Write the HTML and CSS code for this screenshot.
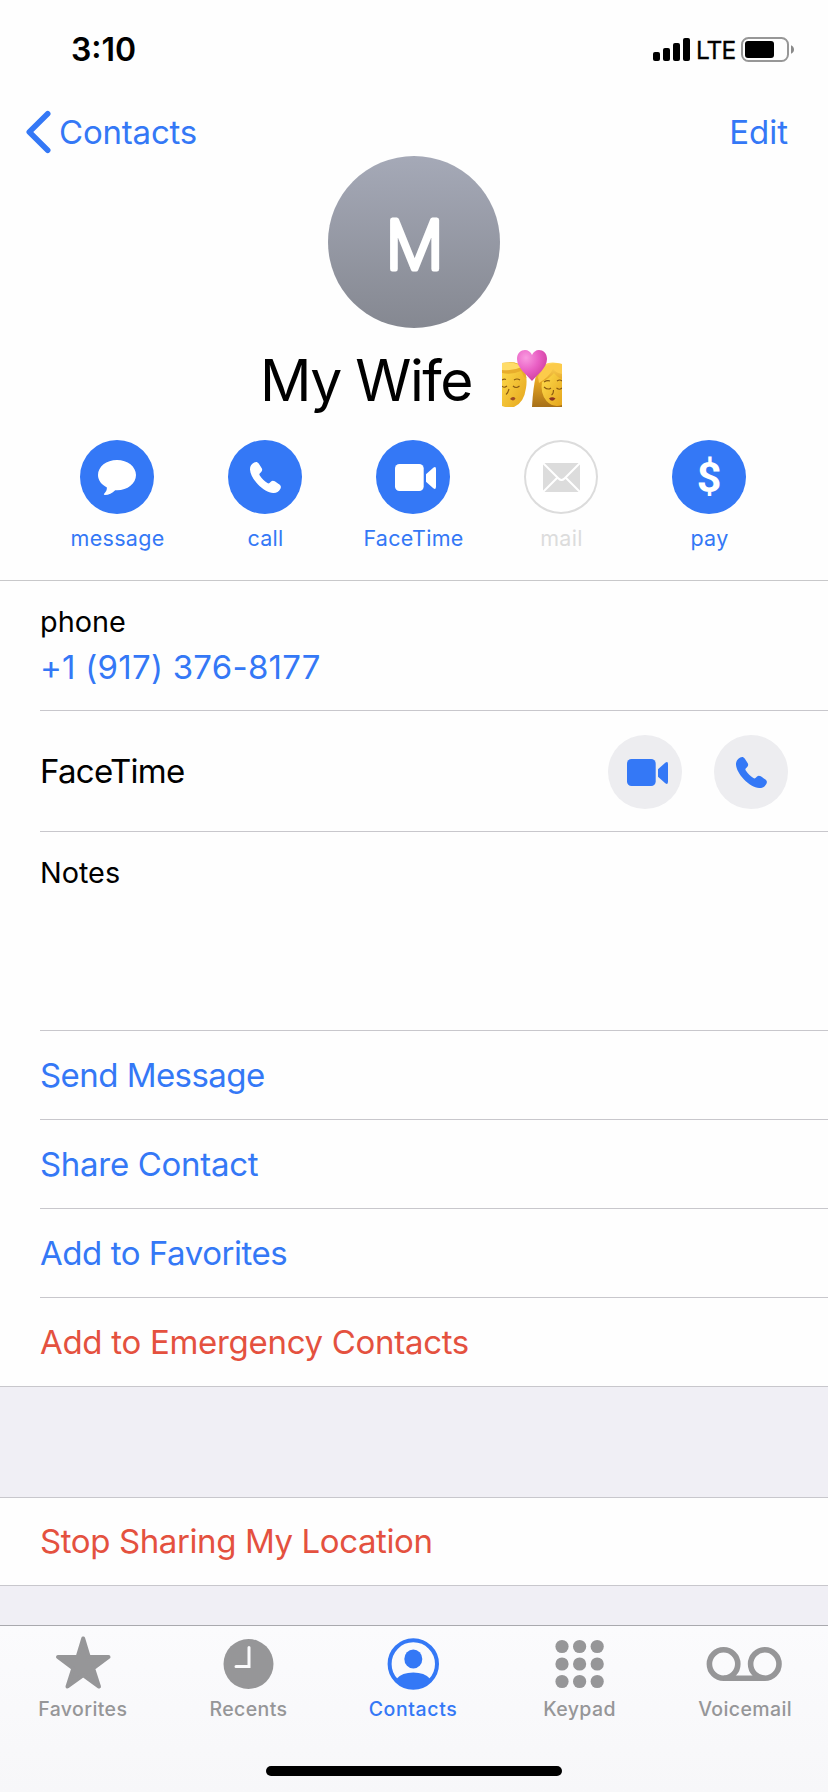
FILE: index.html
```html
<!DOCTYPE html>
<html lang="en">
<head>
<meta charset="utf-8">
<title>My Wife</title>
<link rel="stylesheet" href="styles.css">
</head>
<body>
<svg class="defs" width="0" height="0" aria-hidden="true">
  <symbol id="i-video" viewBox="0 0 74 74">
    <rect x="19" y="24" width="28.7" height="27" rx="4.5"/>
    <path d="M50 34.3 57.3 27.7Q60 25.8 60 29V46.8Q60 50.2 57.3 48.2L50 41.7Z"/>
  </symbol>
  <symbol id="i-phone" viewBox="0 0 74 74">
    <path d="M26.2 22.6C28 21.6 29.6 22 30.7 23.6L33.6 28C34.6 29.6 34.3 31 33 32.2L31.7 33.5C31.2 34.2 31.3 34.8 31.8 35.5C33.8 38.5 36.5 41.2 39.4 43.1C40.2 43.6 40.8 43.6 41.5 43L42.8 41.7C44 40.5 45.3 40.4 46.8 41.3L51.4 44.5C53 45.7 53.3 47.1 52.3 49C50.7 51.9 48.4 53.2 45.2 53C40.5 52.8 34.6 49.2 30 44.4C25.4 39.7 22.2 34.2 22 29.6C21.9 26.4 23.3 24.2 26.2 22.6Z"/>
  </symbol>
</svg>
<div class="screen">
  <header class="header">
    <div class="status">
      <span class="time">3:10</span>
      <div class="status-right">
        <svg class="signal" width="37" height="24" viewBox="0 0 37 24">
          <rect x="0" y="14" width="7" height="9" rx="2"/><rect x="10" y="10" width="7" height="13" rx="2"/><rect x="20" y="5" width="7" height="18" rx="2"/><rect x="30" y="0" width="7" height="23" rx="2"/>
        </svg>
        <span class="lte">LTE</span>
        <svg class="battery" width="53" height="25" viewBox="0 0 53 25">
          <rect x="1" y="1" width="46" height="23" rx="6.5" fill="none" stroke="#979797" stroke-width="2"/>
          <rect x="4" y="4" width="29" height="17" rx="3"/>
          <path d="M50 8.2Q53 9.5 53 12.5T50 16.8Z" fill="#8a8a8a"/>
        </svg>
      </div>
    </div>
    <nav class="nav">
      <a class="back"><svg width="26" height="44" viewBox="0 0 26 44"><path d="M21.7 3.7 3.3 22 21.7 40.3" fill="none" stroke="currentColor" stroke-width="5.6" stroke-linecap="round" stroke-linejoin="round"/></svg><span>Contacts</span></a>
      <a class="edit">Edit</a>
    </nav>
    <div class="avatar">
      <svg width="172" height="172" viewBox="0 0 172 172"><text class="initial" transform="translate(86.5 112.5) scale(.96 1)" text-anchor="middle">M</text></svg>
    </div>
    <div class="name">
      <span>My Wife</span>
      <svg class="emoji" width="60" height="58" viewBox="0 0 60 58">
        <defs>
          <linearGradient id="skin" x1="0" y1="0" x2="1" y2="1"><stop offset="0" stop-color="#ffdd4e"/><stop offset="1" stop-color="#e5a51c"/></linearGradient>
          <linearGradient id="hair" x1="0" y1="0" x2="0" y2="1"><stop offset="0" stop-color="#ffd960"/><stop offset=".45" stop-color="#e3a321"/><stop offset="1" stop-color="#a66f18"/></linearGradient>
          <radialGradient id="heart" cx=".3" cy=".25" r=".85"><stop offset="0" stop-color="#f99ae0"/><stop offset=".5" stop-color="#e95fc4"/><stop offset="1" stop-color="#cb3a98"/></radialGradient>
        </defs>
        <path d="M0 15Q13 9 21 18Q26 26 24 38Q22 53 12 57H3L0 56Z" fill="url(#skin)"/>
        <path d="M0 13Q16 10 22 18L24.500 28L22 27Q21 24 19 21Q10 25 0 23Z" fill="#e8ad2c"/>
        <path d="M0 13Q14 11 20 17Q11 21 0 20Z" fill="#ffdc68"/>
        <path d="M0 30q2-1.500 4-.500M12 30q3-2 6 0M0 36q2 2.500 5 0M11 36q3 3 6.500 0M7 39q-1 4-3 5.500" fill="none" stroke="#8a5a12" stroke-width="1.100"/>
        <path d="M8 49q3-3.500 5.500-.500q-2 3.500-5.500.500Z" fill="#9c4a24"/>
        <path d="M34 25Q41 8 60 14V57H30Q31 38 34 25Z" fill="url(#hair)"/>
        <path d="M40 32Q48 28 52 23Q56 28 60 29V55Q51 58 44.500 51Q38 43 40 32Z" fill="url(#skin)"/>
        <path d="M36 27Q44 10 60 14V24Q54 23 51 19Q47 27 37 33Z" fill="#fccb4a"/>
        <path d="M42 32q3-2 6-1M55 31q3-2 5 0M42 37q4 3.500 7 1M54.500 38q3 2.500 5.500 0M51.500 40q0 4-2 5" fill="none" stroke="#8a5a12" stroke-width="1.100"/>
        <path d="M47 48.500q3-2.500 6.500 0q-3.500 4.500-6.500 0Z" fill="#8c3420"/>
        <path d="M30 31C25 25 15 18 15 9C15 3 19 0 23 0C26 0 29 2 30 5C31 2 34 0 37 0C41 0 45 3 45 9C45 18 35 25 30 31Z" fill="url(#heart)"/>
      </svg>
    </div>
    <div class="actions">
      <div class="action"><div class="disc"><svg width="74" height="74" viewBox="0 0 74 74"><path d="M37 20C47.6 20 56 26.6 56 35.1S47.6 50.3 37 50.3H35.2C32.2 53.4 28.8 55 24.8 55Q23 54.6 24.3 53.4C26.2 51.8 26.9 50.2 26.9 47.6C21.5 44.8 18 40.3 18 35.1C18 26.6 26.4 20 37 20Z"/></svg></div><span>message</span></div>
      <div class="action"><div class="disc"><svg width="74" height="74"><use href="#i-phone"/></svg></div><span>call</span></div>
      <div class="action"><div class="disc"><svg width="74" height="74"><use href="#i-video"/></svg></div><span>FaceTime</span></div>
      <div class="action off"><div class="disc"><svg width="74" height="74" viewBox="0 0 74 74"><rect x="19" y="23" width="37" height="29"/><path d="M18 22 34.5 38.5Q37.5 41.5 40.500 38.5L57 22M18 53 33 38M57 53 42 38" fill="none" stroke="#fff" stroke-width="2"/></svg></div><span>mail</span></div>
      <div class="action"><div class="disc"><svg width="74" height="74" viewBox="0 0 74 74"><text class="dollar" x="37" y="52" text-anchor="middle">$</text></svg></div><span>pay</span></div>
    </div>
  </header>
  <main>
    <section class="group">
      <div class="row phone"><span class="label">phone</span><a>+1 (917) 376-8177</a></div>
      <div class="row facetime"><span class="title">FaceTime</span><div class="btns"><div class="round"><svg width="74" height="74"><use href="#i-video"/></svg></div><div class="round"><svg width="74" height="74"><use href="#i-phone"/></svg></div></div></div>
      <div class="row notes"><span class="label">Notes</span></div>
      <div class="row link t-send">Send Message</div>
      <div class="row link t-share">Share Contact</div>
      <div class="row link t-fav">Add to Favorites</div>
      <div class="row link danger t-emer">Add to Emergency Contacts</div>
    </section>
    <section class="group second">
      <div class="row link danger t-stop">Stop Sharing My Location</div>
    </section>
  </main>
  <footer class="tabbar">
    <div class="tabs">
      <div class="tab"><svg width="80" height="60" viewBox="0 0 80 60"><path d="M40.200 6.500 45.800 25H65.500L50.100 36.400 56 54.500 40.200 43.200 24.500 54.500 30.300 36.400 15 25H34.600Z" stroke="currentColor" stroke-width="4" stroke-linejoin="round"/></svg><span>Favorites</span></div>
      <div class="tab"><svg width="80" height="60" viewBox="0 0 80 60"><circle cx="40.500" cy="32" r="25"/><path d="M41 15.500V34.500H28" fill="none" stroke="#fbfbfd" stroke-width="3" stroke-linecap="round"/></svg><span>Recents</span></div>
      <div class="tab active"><svg width="80" height="60" viewBox="0 0 80 60"><circle cx="39.300" cy="32" r="23.700" fill="none" stroke="currentColor" stroke-width="4"/><ellipse cx="39.300" cy="27" rx="9" ry="9.500"/><path d="M22.600 46.800Q28 40.500 39.300 40.500T56 46.800Q50 56.500 39.300 56.500T22.600 46.800Z"/></svg><span>Contacts</span></div>
      <div class="tab"><svg width="80" height="60" viewBox="0 0 80 60"><circle cx="22" cy="14.500" r="6.600"/><circle cx="39.600" cy="14.500" r="6.600"/><circle cx="57.200" cy="14.500" r="6.600"/><circle cx="22" cy="32" r="6.600"/><circle cx="39.600" cy="32" r="6.600"/><circle cx="57.200" cy="32" r="6.600"/><circle cx="22" cy="49.500" r="6.600"/><circle cx="39.600" cy="49.500" r="6.600"/><circle cx="57.200" cy="49.500" r="6.600"/></svg><span>Keypad</span></div>
      <div class="tab"><svg width="80" height="60" viewBox="0 0 80 60"><g fill="none" stroke="currentColor" stroke-width="5.600"><circle cx="18.600" cy="32" r="14.200"/><circle cx="59.800" cy="32" r="14.200"/><path d="M18.600 46.200H59.800"/></g></svg><span>Voicemail</span></div>
    </div>
    <div class="home"></div>
  </footer>
</div>
</body>
</html>
```
FILE: styles.css
```css
* { box-sizing: border-box; }
body {
  margin: 0;
  background: #fff;
  color: #000;
  font-family: Inter, "Liberation Sans", sans-serif;
  font-size: 33px;
  line-height: 40px;
}
svg { display: block; fill: currentColor; flex: none; }
.defs { position: absolute; }
.screen {
  width: 828px;
  height: 1792px;
  display: flex;
  flex-direction: column;
  background: #f0eff5;
  overflow: hidden;
}
.header {
  height: 581px;
  background: #fefefe;
  border-bottom: 1px solid #c8c8ca;
}
.status {
  height: 100px;
  padding: 0 34px 0 71px;
  display: flex;
  justify-content: space-between;
}
.time { font-size: 32px; font-weight: 600; padding-top: 30px; letter-spacing: 0; }
.status-right { display: flex; align-items: flex-start; padding-top: 37px; }
.signal { margin-top: 1px; }
.lte { width: 51px; padding-left: 6px; font-size: 24.500px; line-height: 27px; letter-spacing: -.9px; -webkit-text-stroke: .3px #000; }
.nav {
  height: 56px;
  padding: 8px 40px 0 26px;
  display: flex;
  align-items: center;
  justify-content: space-between;
  color: #3478f6;
}
.back { display: flex; align-items: center; gap: 7px; letter-spacing: -.2px; }
.avatar {
  width: 172px;
  height: 172px;
  margin: 0 auto;
  border-radius: 50%;
  background: linear-gradient(#a5a9b7, #858891);
  color: #fff;
}
.initial {
  font-family: Inter, sans-serif;
  font-weight: 200;
  font-size: 67px;
  stroke: #fff;
  stroke-width: 5px;
  stroke-linejoin: round;
}
.name {
  height: 112px;
  padding: 23px 0 0 260px;
  display: flex;
  font-size: 57px;
  line-height: 60px;
  letter-spacing: -1.500px;
}
.name span { width: 242px; white-space: nowrap; }
.emoji { margin-top: -1px; }
.actions { display: flex; padding-left: 43px; }
.action {
  width: 148px;
  display: flex;
  flex-direction: column;
  align-items: center;
  color: #3478f6;
  font-size: 21.500px;
  line-height: 28px;
  letter-spacing: .3px;
}
.action span { padding: 10px 0 0 1px; }
.disc { width: 74px; height: 74px; border-radius: 50%; background: #3478f6; color: #fff; }
.off { color: #dcdcdc; }
.off .disc { background: #fff; color: #dcdcdc; box-shadow: inset 0 0 0 2px #dcdcdc; }
.dollar { font: bold 43px Roboto, sans-serif; letter-spacing: 0; }
.group { background: #fefefe; border-bottom: 1px solid #c8c7cc; padding-left: 40px; }
.row { border-bottom: 1px solid #c8c7cc; display: flex; white-space: nowrap; }
.row:last-child { border-bottom: 0; }
.label { font-size: 28.800px; }
.phone { height: 130px; flex-direction: column; padding-top: 21px; line-height: 40px; }
.phone a { color: #3478f6; padding-top: 5px; letter-spacing: .25px; }
.facetime { height: 121px; align-items: center; justify-content: space-between; padding: 2px 40px 0 0; letter-spacing: -.7px; }
.title { padding-bottom: 2px; }
.btns { display: flex; gap: 32px; color: #3478f6; }
.round { width: 74px; height: 74px; border-radius: 50%; background: #ededf0; }
.notes { height: 199px; padding-top: 21px; }
.link { height: 89px; align-items: center; color: #3478f6; }
.link:last-child { height: 88px; }
.t-send { letter-spacing: -.55px; }
.t-share { letter-spacing: -.3px; }
.t-fav { letter-spacing: -.45px; }
.t-emer { letter-spacing: -.3px; }
.t-stop { letter-spacing: -.4px; padding-bottom: 2px; }
.danger { color: #e4513f; }
.second { margin-top: 110px; border-top: 1px solid #c8c7cc; }
.second .link:last-child { height: 87px; }
.tabbar {
  height: 167px;
  margin-top: auto;
  border-top: 1px solid #a9a9ae;
  background: linear-gradient(#fbfbfd, #f7f7f9);
}
.tabs { display: flex; height: 140px; padding-top: 6px; }
.tab {
  flex: 1;
  display: flex;
  flex-direction: column;
  align-items: center;
  color: #969698;
  font-size: 19.500px;
  font-weight: 500;
  line-height: 24px;
  letter-spacing: .4px;
}
.tab span { padding-top: 5px; }
.tab.active { color: #3478f6; }
.tab.active span { letter-spacing: .6px; padding-right: 2px; }
.home { width: 296px; height: 10px; margin: 0 auto; border-radius: 5px; background: #000; }
```
